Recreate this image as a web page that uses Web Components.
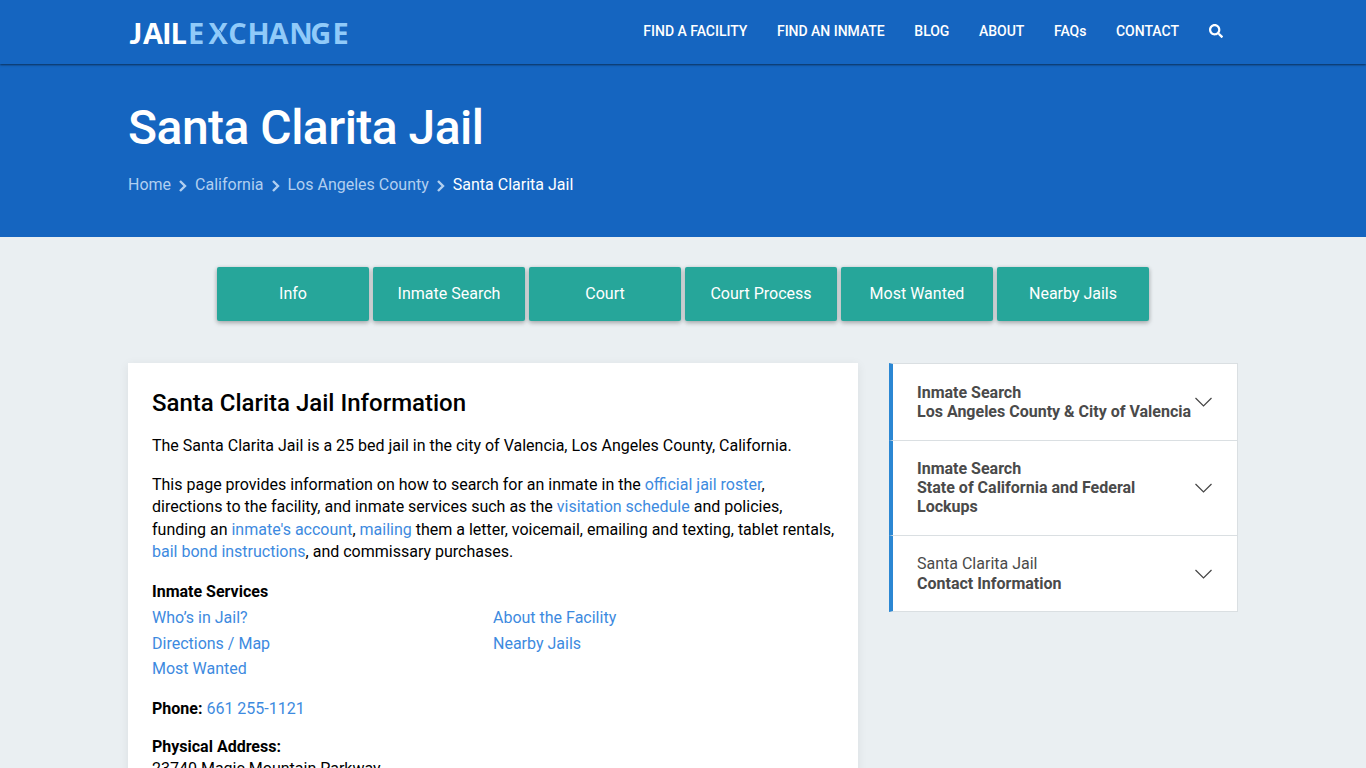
<!DOCTYPE html>
<html lang="en"><head><meta charset="utf-8"><title>Santa Clarita Jail</title>
<style>html,body{margin:0;height:768px;overflow:hidden;background:#eaeff2;font-family:Roboto,"Liberation Sans",sans-serif}</style></head>
<body><jail-page></jail-page>
<script>
const define=(name,html)=>{const t=document.createElement('template');t.innerHTML=html;customElements.define(name,class extends HTMLElement{constructor(){super();this.attachShadow({mode:'open'}).append(t.content.cloneNode(true));}});};

define('site-logo',`<style>:host{display:block;width:222px;height:40px}svg{display:block}text{font:700 29px "Open Sans","Noto Sans",sans-serif}.j{font-family:Lato,sans-serif;font-weight:900}</style>
<svg width="222" height="40" viewBox="0 0 222 40"><text class="j" x="1.500" y="32" fill="#fff">J</text><text x="15 34 42.400" y="32" fill="#fff">AIL</text><text x="60 80.500 100.300 119.400 140.500 161.300 182.300 204.400" y="32" fill="#90caf9">EXCHANGE</text><path d="M91.500 18l4.500 7" stroke="#1565c0" stroke-width=".9"/></svg>`);

define('site-header',`<style>:host{display:block;height:64px;background:#1565c0;box-shadow:0 1px 2px rgba(0,0,0,.55);position:relative;color:#fff}
.in{display:flex;justify-content:space-between;height:64px;width:1110px;margin:0 auto}site-logo{margin-top:12px}
nav{display:flex;gap:29.6px;align-items:center;height:62px;font-size:14px;font-weight:500;margin-right:15.500px;white-space:nowrap;letter-spacing:-.02px}svg{display:block}</style>
<div class="in"><site-logo></site-logo><nav><span>FIND A FACILITY</span><span>FIND AN INMATE</span><span>BLOG</span><span>ABOUT</span><span>FAQs</span><span>CONTACT</span><svg width="14" height="14" viewBox="0 0 512 512" fill="#fff"><path d="M505 442.700L405.300 343c-4.500-4.500-10.600-7-17-7H372c27.600-35.300 44-79.700 44-128C416 93.100 322.900 0 208 0S0 93.100 0 208s93.100 208 208 208c48.300 0 92.700-16.400 128-44v16.300c0 6.400 2.500 12.500 7 17l99.700 99.700c9.400 9.400 24.600 9.400 33.900 0l28.300-28.300c9.400-9.400 9.400-24.600.1-34zM208 336c-70.700 0-128-57.200-128-128 0-70.700 57.200-128 128-128 70.700 0 128 57.200 128 128 0 70.700-57.200 128-128 128z"/></svg></nav></div>`);

define('crumb-item',`<style>:host{display:flex;align-items:center;color:#b1cff0}:host([current]){color:#fff}svg{margin:1px 8px 0}:host([current]) svg{display:none}</style><slot></slot><svg width="8" height="12" viewBox="0 0 8 12" fill="none" stroke="currentColor" stroke-width="2.4"><path d="M1 1l5 5-5 5"/></svg>`);

define('page-hero',`<style>:host{display:block;height:173px;background:#1565c0;color:#fff}.in{width:1110px;margin:0 auto;padding-top:35px}h1{margin:0;font-size:48px;font-weight:500;line-height:58px;letter-spacing:-.52px}.c{display:flex;margin-top:18px;font-size:16px;line-height:20px}</style>
<div class="in"><h1>Santa Clarita Jail</h1><div class="c"><crumb-item>Home</crumb-item><crumb-item>California</crumb-item><crumb-item>Los Angeles County</crumb-item><crumb-item current>Santa Clarita Jail</crumb-item></div></div>`);

define('tab-button',`<style>:host{display:flex;align-items:center;justify-content:center;width:152px;height:54px;background:#26a69a;color:#fff;font-size:16px;border-radius:2px;box-shadow:0 2px 5px rgba(0,0,0,.22),0 1px 4px rgba(0,0,0,.14)}span{margin-top:-1px}</style><span><slot></slot></span>`);

define('side-item',`<style>:host{display:flex;align-items:center;box-sizing:border-box;background:#fff;border:1px solid #dadfe2;border-top:0;border-left:4px solid #2b87d3;color:#4a4a4a;font-size:16px;line-height:19px;padding:0 25.500px 0 24px;justify-content:space-between}:host(:first-child){border-top:1px solid #dadfe2}div{white-space:nowrap}svg{flex:none}</style><div><slot></slot></div><svg width="17" height="10" viewBox="0 0 17 10" fill="none" stroke="#444" stroke-width="1.2"><path d="M.5 1l8 8 8-8"/></svg>`);

define('info-card',`<style>:host{display:block;box-sizing:border-box;width:730px;height:450px;background:#fff;padding:24px;box-shadow:0 2px 10px rgba(0,0,0,.07);color:#000;font-size:16px;line-height:22.4px;font-weight:400}
h2{font-size:24px;font-weight:500;line-height:32px;margin:0 0 16px}p{margin:0 0 16.300px;white-space:nowrap}a{color:#3d8ae0}b{font-weight:700}
.cols{display:grid;grid-template-columns:341px 1fr;line-height:25.6px;margin-bottom:16px}</style>
<h2>Santa Clarita Jail Information</h2>
<p>The Santa Clarita Jail is a 25 bed jail in the city of Valencia, Los Angeles County, California.</p>
<p>This page provides information on how to search for an inmate in the <a>official jail roster</a>,<br>directions to the facility, and inmate services such as the <a>visitation schedule</a> and policies,<br>funding an <a>inmate's account</a>, <a>mailing</a> them a letter, voicemail, emailing and texting, tablet rentals,<br><a>bail bond instructions</a>, and commissary purchases.</p>
<p style="margin:17.500px 0 2px"><b>Inmate Services</b></p>
<div class="cols"><a>Who’s in Jail?</a><a>About the Facility</a><a>Directions / Map</a><a>Nearby Jails</a><a>Most Wanted</a></div>
<p style="margin-bottom:15.600px"><b>Phone:</b> <a>661 255-1121</a></p>
<p><b>Physical Address:</b><br>23740 Magic Mountain Parkway</p>`);

define('jail-page',`<style>:host{display:block;height:768px;overflow:hidden}.tabs{display:flex;justify-content:center;gap:4px;padding-top:30px}.main{display:flex;width:1110px;margin:42px auto 0;gap:31px;align-items:flex-start}aside{width:349px}b{font-weight:700}.l{display:inline-block;line-height:20px}side-item:nth-child(1){height:78px}side-item:nth-child(2){height:95px;padding-bottom:1px}side-item:nth-child(3){height:76px}</style>
<site-header></site-header><page-hero></page-hero>
<div class="tabs"><tab-button>Info</tab-button><tab-button>Inmate Search</tab-button><tab-button>Court</tab-button><tab-button>Court Process</tab-button><tab-button>Most Wanted</tab-button><tab-button>Nearby Jails</tab-button></div>
<div class="main"><info-card></info-card><aside><side-item><b>Inmate Search<br>Los Angeles County &amp; City of Valencia</b></side-item><side-item><b>Inmate Search<br>State of California and Federal<br>Lockups</b></side-item><side-item><span class="l">Santa Clarita Jail</span><br><b>Contact Information</b></side-item></aside></div>`);
</script></body></html>
